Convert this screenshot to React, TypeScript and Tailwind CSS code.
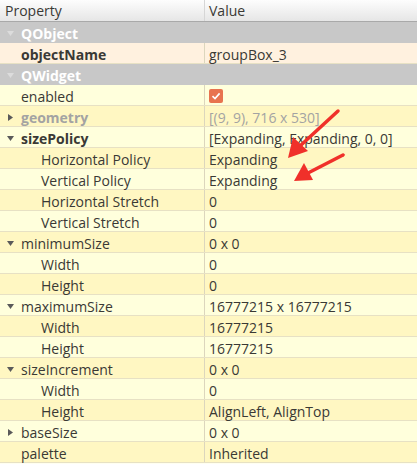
import React from "react";

type Row = {
  kind: "group" | "prop";
  name: string;
  value?: string;
  level?: number;
  expander?: "open" | "closed";
  bold?: boolean;
  dim?: boolean;
  check?: boolean;
  bg?: string;
};

const rows: Row[] = [
  { kind: "group", name: "QObject" },
  { kind: "prop", name: "objectName", value: "groupBox_3", bold: true, bg: "bg-[#fff1df]" },
  { kind: "group", name: "QWidget" },
  { kind: "prop", name: "enabled", check: true },
  { kind: "prop", name: "geometry", value: "[(9, 9), 716 x 530]", expander: "closed", bold: true, dim: true },
  { kind: "prop", name: "sizePolicy", value: "[Expanding, Expanding, 0, 0]", expander: "open", bold: true },
  { kind: "prop", name: "Horizontal Policy", value: "Expanding", level: 1 },
  { kind: "prop", name: "Vertical Policy", value: "Expanding", level: 1 },
  { kind: "prop", name: "Horizontal Stretch", value: "0", level: 1 },
  { kind: "prop", name: "Vertical Stretch", value: "0", level: 1 },
  { kind: "prop", name: "minimumSize", value: "0 x 0", expander: "open" },
  { kind: "prop", name: "Width", value: "0", level: 1 },
  { kind: "prop", name: "Height", value: "0", level: 1 },
  { kind: "prop", name: "maximumSize", value: "16777215 x 16777215", expander: "open" },
  { kind: "prop", name: "Width", value: "16777215", level: 1 },
  { kind: "prop", name: "Height", value: "16777215", level: 1 },
  { kind: "prop", name: "sizeIncrement", value: "0 x 0", expander: "open" },
  { kind: "prop", name: "Width", value: "0", level: 1 },
  { kind: "prop", name: "Height", value: "AlignLeft, AlignTop", level: 1 },
  { kind: "prop", name: "baseSize", value: "0 x 0", expander: "closed" },
  { kind: "prop", name: "palette", value: "Inherited" },
];

function Expander({ state, light }: { state?: "open" | "closed"; light?: boolean }) {
  if (!state) return <span className="w-[21px] shrink-0" />;
  const fill = light ? "#dcdcdc" : "#5a5a5a";
  return (
    <span className="w-[21px] shrink-0 flex items-center pl-[7px]">
      <svg width="7" height="7" viewBox="0 0 7 7">
        {state === "open" ? (
          <polygon points="0,1 7,1 3.5,6" fill={fill} />
        ) : (
          <polygon points="1,0 6,3.5 1,7" fill={fill} />
        )}
      </svg>
    </span>
  );
}

function CheckBox() {
  return (
    <span className="w-[14px] h-[14px] rounded-[2px] bg-[#e8734f] flex items-center justify-center">
      <svg width="10" height="10" viewBox="0 0 10 10">
        <path d="M1.5 5.2 L4 7.6 L8.6 2.4" stroke="#fff" strokeWidth="1.6" fill="none" />
      </svg>
    </span>
  );
}

export default function App() {
  let yellowIndex = 0;

  return (
    <div
      className="relative w-[417px] h-[464px] overflow-hidden bg-[#fffff0] text-[14px] text-[#3a3935]"
      style={{ fontFamily: '"Open Sans", "Noto Sans", sans-serif' }}
    >
      {/* header */}
      <div className="flex h-[22px] bg-gradient-to-b from-[#fdfdfd] to-[#e6e6e6] border-b border-[#a9a9a9]">
        <div className="w-[205px] shrink-0 pl-[5px] flex items-center border-r border-[#d6d6d6]">Property</div>
        <div className="flex-1 pl-[4px] flex items-center">Value</div>
      </div>

      {rows.map((r, i) => {
        if (r.kind === "group") {
          yellowIndex = 0;
          return (
            <div key={i} className="flex h-[21px] bg-[#c8c8c8] pt-[2px]">
              <div className="w-[205px] shrink-0 flex items-center">
                <Expander state="open" light />
                <span className="font-bold text-white">{r.name}</span>
              </div>
              <div className="flex-1" />
            </div>
          );
        }
        const bg = r.bg ?? (yellowIndex++ % 2 === 0 ? "bg-[#ffffdc]" : "bg-[#fff7c2]");
        return (
          <div key={i} className={`flex h-[21px] border-b border-[#e7e1c4] ${bg}`}>
            <div className="w-[205px] shrink-0 flex items-center pt-[2px] border-r border-[#dcd6bd]">
              {r.level === 1 && <span className="w-[20px] shrink-0" />}
              <Expander state={r.expander} />
              <span className={`${r.bold ? "font-bold" : ""} ${r.dim ? "text-[#a3a3a3]" : ""}`}>{r.name}</span>
            </div>
            <div className={`flex-1 pl-[4px] pt-[2px] flex items-center whitespace-nowrap ${r.dim ? "text-[#a3a3a3]" : ""}`}>
              {r.check ? <CheckBox /> : r.value}
            </div>
          </div>
        );
      })}

      {/* red annotation arrows */}
      <svg className="absolute left-0 top-0 pointer-events-none" width="417" height="464">
        <path d="M338 111 L300 146" stroke="#f0302a" strokeWidth="3.5" strokeLinecap="round" />
        <polygon points="288,158 293,137 308,151" fill="#f0302a" />
        <path d="M343 155 L308 173" stroke="#f0302a" strokeWidth="3.5" strokeLinecap="round" />
        <polygon points="294,181 304,163 313,180" fill="#f0302a" />
      </svg>
    </div>
  );
}
